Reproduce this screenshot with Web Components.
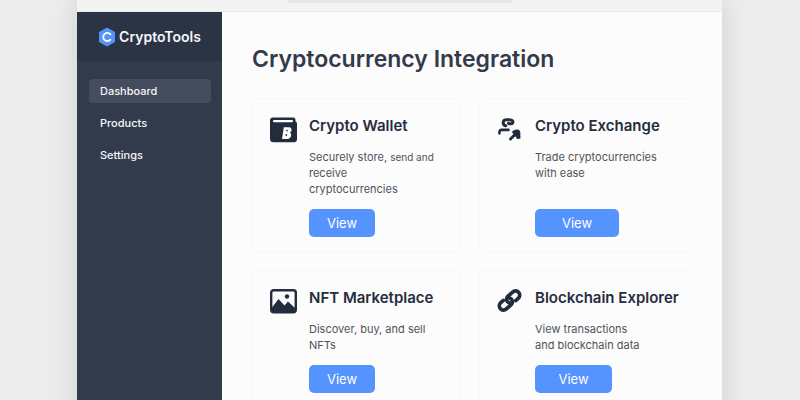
<!DOCTYPE html>
<html lang="en">
<head>
<meta charset="utf-8">
<meta name="viewport" content="width=device-width, initial-scale=1">
<title>CryptoTools</title>
<style>
    * {
        box-sizing: border-box;
    }
    body {
        margin: 0;
        padding: 0 78px 0 77px;
        min-height: 100vh;
        background: #ececec;
        color: #262d3d;
        font-family: Inter, "Liberation Sans", sans-serif;
    }
</style>
</head>
<body>

<app-window>
    <side-bar slot="sidebar" brand="CryptoTools">
        <nav-item href="#dashboard" active>Dashboard</nav-item>
        <nav-item href="#products">Products</nav-item>
        <nav-item href="#settings">Settings</nav-item>
    </side-bar>

    <page-content heading="Cryptocurrency Integration">
        <tool-card heading="Crypto Wallet">
            <svg slot="icon" width="27" height="27" viewBox="0 0 27 27">
                <path fill="#222c3d" d="M3 1.600h20a2.500 2.500 0 0 1 2.500 2.500v1.500a2 2 0 0 1 1.500 2v15.700a3 3 0 0 1-3 3H3.500a3.500 3.500 0 0 1-3.500-3.500V4.600a3 3 0 0 1 3-3z"/>
                <rect x="3" y="4" width="20" height="2.200" rx="1" fill="#fff"/>
                <path fill="#fff" fill-rule="evenodd" d="M13.800 11.300h5.300c3 .4 3.300 4 .8 5.300 2.300 1.500 1.400 6-2 6.300H12l.4-2.200zM16.500 13.700l-.3 1.900c2 0 2.300-1.900.3-1.900zM15.800 18l-.4 2.200c2 .1 2.500-2.200.4-2.200z"/>
            </svg>
            Securely store, <small>send and</small><br>receive<br>cryptocurrencies
        </tool-card>

        <tool-card heading="Crypto Exchange" style="--button-width: 84px">
            <svg slot="icon" width="26" height="27" viewBox="1 0 26 27">
                <g fill="none" stroke="#222c3d" stroke-linecap="round" stroke-linejoin="round">
                    <path stroke-width="3" d="M12.500 7.300c3.200 1.400 5.200-.3 4-2.500-.6-1-2-1.100-3.500-1.100h-2.500C6.500 3.700 6 9 9.800 9.800"/>
                    <path stroke-width="2.600" d="M3.500 17.300c-.6-2.300.4-3.500 2.600-3.400h6.400"/>
                    <path stroke-width="3" d="M14.500 23l5.500-5.500"/>
                </g>
                <path fill="#222c3d" stroke="#222c3d" stroke-width="1.600" stroke-linejoin="round" d="M16.800 16q2-2 4.500-1.700 2 .2 2.200 2l.2 5.700-2.200.2-2-3.200z"/>
            </svg>
            Trade cryptocurrencies<br>with ease
        </tool-card>

        <tool-card heading="NFT Marketplace">
            <svg slot="icon" width="27" height="27" viewBox="0 0 27 27">
                <rect x="1.200" y="2.200" width="24.600" height="22" rx="2.500" fill="none" stroke="#222c3d" stroke-width="2.400"/>
                <path fill="#222c3d" d="M2 19.500l6.500-8.500 6 6.500 3.500-4 7 6.500v4H2z"/>
                <circle cx="17" cy="8.500" r="2.200" fill="#222c3d"/>
            </svg>
            Discover, buy, and sell<br>NFTs
        </tool-card>

        <tool-card heading="Blockchain Explorer" style="--button-width: 77px">
            <svg slot="icon" width="26" height="27" viewBox="0 0 26 27">
                <g fill="none" stroke="#222c3d" stroke-width="3.700" stroke-linecap="round" stroke-linejoin="round" transform="translate(12.500 12.500) rotate(-42)">
                    <path d="M4.500 4.200H8a4.200 4.200 0 0 0 0-8.400H1.500a4 4 0 0 0-3.300 6"/>
                    <path d="M-4.500-4.200H-8a4.200 4.200 0 0 0 0 8.400h6.500a4 4 0 0 0 3.300-6"/>
                </g>
            </svg>
            View transactions<br>and blockchain data
        </tool-card>
    </page-content>
</app-window>

<script>
// Window frame: toolbar on top, sidebar and content below
class AppWindow extends HTMLElement {
    constructor() {
        super();
        this.attachShadow({ mode: 'open' }).innerHTML = `
            <style>
                :host {
                    display: flex;
                    flex-direction: column;
                    min-height: 100vh;
                    background: #fcfcfc;
                    box-shadow: 0 0 24px rgba(0, 0, 0, 0.12);
                }
                .toolbar {
                    display: flex;
                    justify-content: center;
                    height: 11px;
                    background: #f3f3f3;
                    border-bottom: 1px solid #eaeaea;
                }
                .address {
                    width: 35%;
                    height: 3px;
                    background: #e6e6e6;
                    border-radius: 0 0 4px 4px;
                }
                .body {
                    display: flex;
                    flex: 1;
                }
            </style>
            <div class="toolbar"><div class="address"></div></div>
            <div class="body">
                <slot name="sidebar"></slot>
                <slot></slot>
            </div>
        `;
    }
}

// Sidebar with the brand and the navigation links
class SideBar extends HTMLElement {
    constructor() {
        super();
        this.attachShadow({ mode: 'open' }).innerHTML = `
            <style>
                :host {
                    flex: 0 0 145px;
                    background: #323b4c;
                    color: #f5f6f8;
                }
                .brand {
                    display: flex;
                    align-items: center;
                    justify-content: center;
                    gap: 3px;
                    height: 49px;
                    background: #2b3444;
                    font-size: 14px;
                    font-weight: 600;
                }
                nav {
                    display: flex;
                    flex-direction: column;
                    gap: 8px;
                    padding: 18px 11px 18px 12px;
                }
            </style>
            <div class="brand">
                <svg width="18" height="20" viewBox="0 0 18 20">
                    <path fill="#5593fb" d="M9 .5l8 4.500v10l-8 4.500-8-4.500V5z"/>
                    <path fill="none" stroke="#fff" stroke-width="1.800" stroke-linecap="round" d="M12.400 7.300a4.100 4.100 0 1 0 0 5.400"/>
                </svg>
                <span>${this.getAttribute('brand')}</span>
            </div>
            <nav><slot></slot></nav>
        `;
    }
}

class NavItem extends HTMLElement {
    constructor() {
        super();
        this.attachShadow({ mode: 'open' }).innerHTML = `
            <style>
                :host {
                    display: block;
                }
                a {
                    display: block;
                    padding: 0 11px;
                    border-radius: 4px;
                    color: inherit;
                    font-size: 11px;
                    font-weight: 500;
                    line-height: 24px;
                    text-decoration: none;
                }
                :host([active]) a {
                    background: #454c5e;
                }
            </style>
            <a href="${this.getAttribute('href')}"><slot></slot></a>
        `;
    }
}

// Main area: page title and the grid of cards
class PageContent extends HTMLElement {
    constructor() {
        super();
        this.attachShadow({ mode: 'open' }).innerHTML = `
            <style>
                :host {
                    flex: 1;
                    padding: 31px 28px 24px 30px;
                }
                h1 {
                    margin: 0;
                    color: #323a4b;
                    font-size: 23px;
                    font-weight: 600;
                    line-height: 32px;
                }
                .grid {
                    display: grid;
                    grid-template-columns: 209fr 215fr;
                    gap: 18px;
                    margin-top: 23px;
                }
            </style>
            <h1>${this.getAttribute('heading')}</h1>
            <div class="grid"><slot></slot></div>
        `;
    }
}

class ToolCard extends HTMLElement {
    constructor() {
        super();
        this.attachShadow({ mode: 'open' }).innerHTML = `
            <style>
                :host {
                    display: flex;
                    gap: 12px;
                    box-sizing: border-box;
                    padding: 17px 10px 14px 17px;
                    border: 1px solid #f7f7f7;
                    border-radius: 5px;
                }
                .text {
                    display: flex;
                    flex: 1;
                    flex-direction: column;
                    align-items: flex-start;
                    white-space: nowrap;
                }
                h2 {
                    margin: 0;
                    font-size: 15px;
                    font-weight: 600;
                    line-height: 20px;
                }
                p {
                    margin: 13px 0 12px;
                    color: #505359;
                    font-size: 11px;
                    line-height: 16px;
                }
                ::slotted(small) {
                    font-size: 10px;
                }
                button {
                    width: var(--button-width, 66px);
                    height: 28px;
                    margin-top: auto;
                    padding: 0;
                    border: 0;
                    border-radius: 5px;
                    background: #5593fe;
                    color: #fff;
                    font: inherit;
                    font-size: 13px;
                }
            </style>
            <slot name="icon"></slot>
            <div class="text">
                <h2>${this.getAttribute('heading')}</h2>
                <p><slot></slot></p>
                <button type="button">View</button>
            </div>
        `;
    }
}

customElements.define('app-window', AppWindow);
customElements.define('side-bar', SideBar);
customElements.define('nav-item', NavItem);
customElements.define('page-content', PageContent);
customElements.define('tool-card', ToolCard);
</script>
</body>
</html>
